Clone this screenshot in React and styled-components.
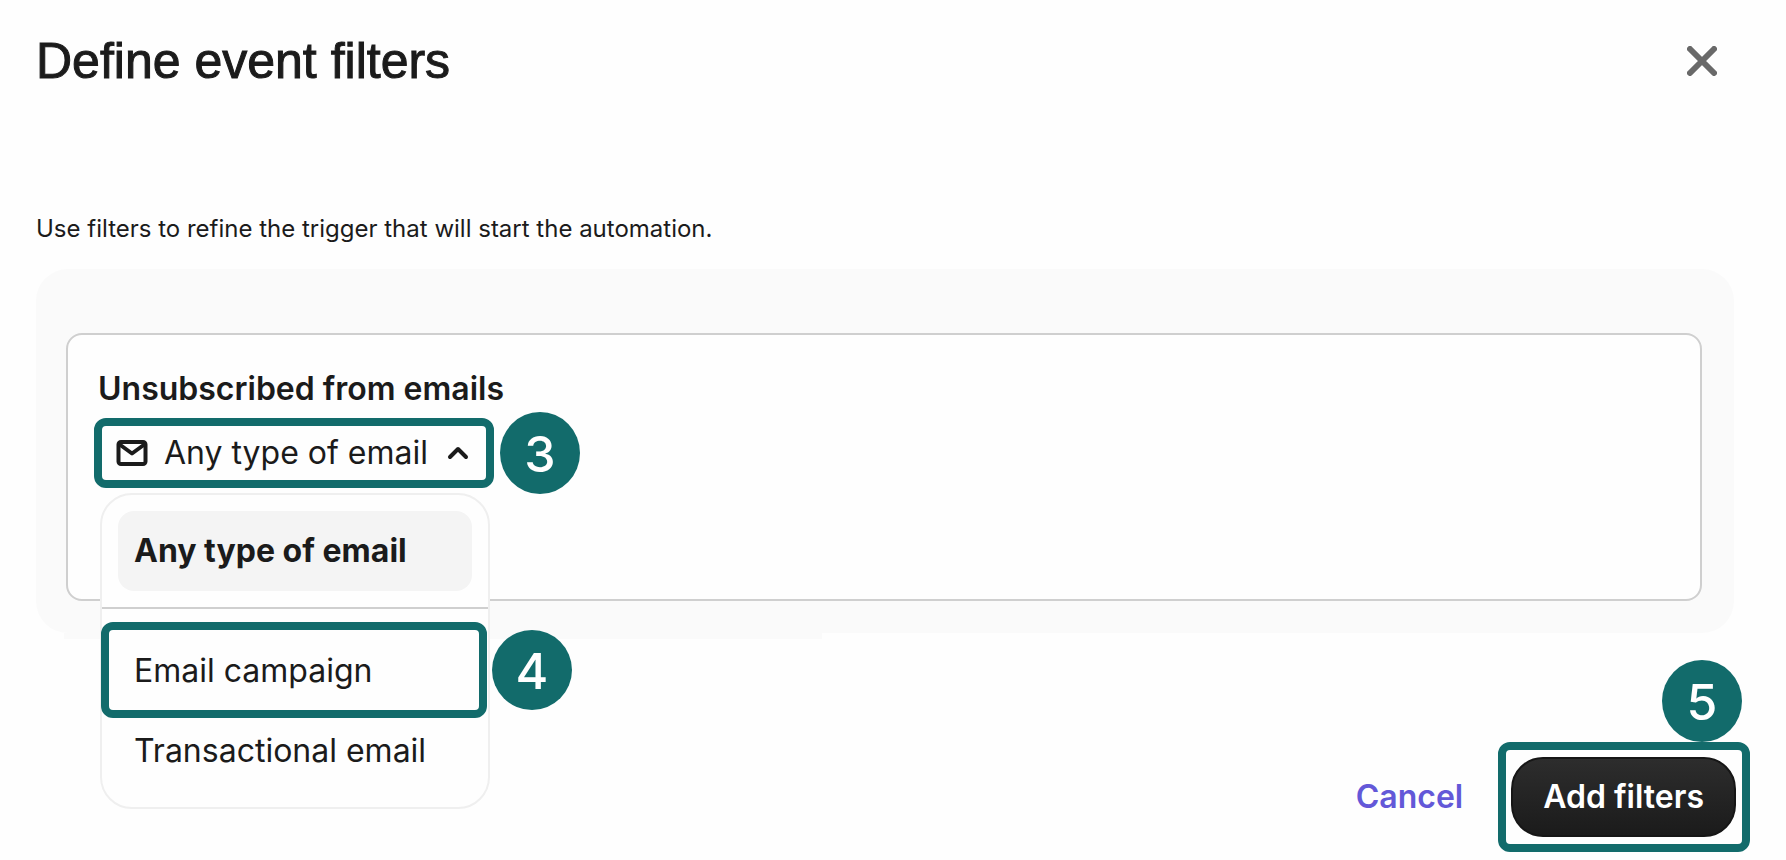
import React, { useState } from 'react';
import styled, { createGlobalStyle } from 'styled-components';

const TEAL = '#126b6b';
const INK = '#1b1b1b';

const GlobalStyle = createGlobalStyle`
    * {
        box-sizing: border-box;
    }

    body {
        margin: 0;
        background: #fefefe;
        color: ${INK};
        font-family: Inter, "Liberation Sans", sans-serif;
    }

    button {
        border: 0;
        padding: 0;
        background: none;
        color: inherit;
        font: inherit;
        cursor: pointer;
    }
`;

const Dialog = styled.main`
    padding: 33px 52px 22px 36px;
`;

const Header = styled.header`
    display: flex;
    align-items: center;
    justify-content: space-between;
    padding-right: 12px;
`;

const Title = styled.h1`
    margin: 0;
    font-family: "Liberation Sans", Arial, sans-serif;
    font-size: 50px;
    font-weight: 400;
    line-height: 56px;
    -webkit-text-stroke: 1px ${INK};
`;

const CloseButton = styled.button`
    display: flex;
    align-items: center;
    justify-content: center;
    width: 40px;
    height: 40px;
`;

const Intro = styled.p`
    margin: 124px 0 24px;
    font-size: 24px;
    line-height: 32px;
`;

const Panel = styled.section`
    position: relative;
    padding: 64px 32px 32px 30px;
    border-radius: 32px;
    background: #fafafa;

    &::after {
        content: '';
        position: absolute;
        top: 100%;
        left: 28px;
        width: 758px;
        height: 6px;
        background: #fafafa;
    }
`;

const Card = styled.div`
    padding: 34px 30px 117px;
    border: 2px solid #cfcfcf;
    border-radius: 16px;
    background: #fefefe;
`;

const CardTitle = styled.h2`
    margin: 0 0 15px;
    font-size: 32px;
    font-weight: 600;
    line-height: 40px;
`;

const Picker = styled.div`
    position: relative;
    z-index: 1;
    width: 388px;
    margin-left: 2px;
`;

const Trigger = styled.button`
    display: flex;
    align-items: center;
    width: 100%;
    height: 58px;
    padding: 0 18px 0 14px;
    font-size: 32px;
    line-height: 40px;
`;

const TriggerLabel = styled.span`
    flex: 1;
    padding-left: 14px;
    text-align: left;
    white-space: nowrap;
`;

const Menu = styled.div`
    position: absolute;
    top: 69px;
    left: 0;
    width: 390px;
    padding: 16px 0;
    border: 2px solid #efefef;
    border-radius: 32px;
    background: #fefefe;
`;

const Divider = styled.hr`
    margin: 16px 0 22px;
    border: 0;
    border-top: 2px solid #cfcfcf;
`;

const OptionRow = styled.div`
    position: relative;
    padding: 0 16px;
`;

const Option = styled.button`
    display: block;
    width: 100%;
    padding: 20px 16px;
    border-radius: 16px;
    background: ${({ $selected }) => ($selected ? '#f4f4f4' : 'transparent')};
    font-size: 32px;
    font-weight: ${({ $selected }) => ($selected ? 700 : 400)};
    line-height: 40px;
    text-align: left;
    white-space: nowrap;
`;

// outline drawn around the control that a step talks about
const Highlight = styled.span`
    position: absolute;
    inset: ${({ $inset }) => $inset};
    border: 8px solid ${TEAL};
    border-radius: 12px;
    pointer-events: none;
`;

const Step = styled.span`
    position: absolute;
    top: ${({ $top }) => $top};
    left: ${({ $left }) => $left};
    display: flex;
    align-items: center;
    justify-content: center;
    width: 80px;
    height: ${({ $height }) => $height || '82px'};
    padding-top: 2px;
    border-radius: 50%;
    background: ${TEAL};
    color: #ffffff;
    font-size: 50px;
    font-weight: 500;
    line-height: 60px;
    pointer-events: none;
`;

const Footer = styled.footer`
    display: flex;
    align-items: center;
    justify-content: flex-end;
    gap: 48px;
    margin: 124px -2px 0 0;
    font-size: 32px;
    font-weight: 600;
    line-height: 40px;
`;

const CancelButton = styled.button`
    color: #6358d8;
`;

const SubmitWrap = styled.div`
    position: relative;
`;

const SubmitButton = styled.button`
    padding: 18px 30px;
    border: 2px solid #161616;
    border-radius: 32px;
    background: linear-gradient(#2d2d2d, #1b1b1b);
    color: #ffffff;
    white-space: nowrap;
`;

const CloseIcon = () => (
    <svg width="30" height="30" viewBox="0 0 30 30" fill="none" aria-hidden="true">
        <path d="M3 3L27 27M27 3L3 27" stroke="#696969" strokeWidth="6" strokeLinecap="round" />
    </svg>
);

const MailIcon = () => (
    <svg width="36" height="36" viewBox="0 0 36 36" fill="none" stroke={INK} strokeWidth="4" strokeLinejoin="round" aria-hidden="true">
        <rect x="4.5" y="7" width="27" height="22" rx="2.5" />
        <path d="M5 9L18 18.5L31 9" />
    </svg>
);

const ChevronIcon = () => (
    <svg width="24" height="24" viewBox="0 0 24 24" fill="none" aria-hidden="true">
        <path d="M4 16L12 8L20 16" stroke={INK} strokeWidth="4" strokeLinecap="round" strokeLinejoin="round" />
    </svg>
);

const ANY = 'Any type of email';
const TYPES = ['Email campaign', 'Transactional email'];

export default function App() {
    const [open, setOpen] = useState(true);
    const [selected, setSelected] = useState(ANY);

    const renderOption = (name) => (
        <Option
            type="button"
            role="option"
            aria-selected={selected === name}
            $selected={selected === name}
            onClick={() => setSelected(name)}
        >
            {name}
        </Option>
    );

    return (
        <>
            <GlobalStyle />
            <Dialog>
                <Header>
                    <Title>Define event filters</Title>
                    <CloseButton type="button" aria-label="Close">
                        <CloseIcon />
                    </CloseButton>
                </Header>

                <Intro>Use filters to refine the trigger that will start the automation.</Intro>

                <Panel>
                    <Card>
                        <CardTitle id="filter-title">Unsubscribed from emails</CardTitle>
                        <Picker>
                            <Trigger
                                type="button"
                                aria-haspopup="listbox"
                                aria-expanded={open}
                                onClick={() => setOpen(!open)}
                            >
                                <MailIcon />
                                <TriggerLabel>{selected}</TriggerLabel>
                                <ChevronIcon />
                            </Trigger>
                            {open && (
                                <Menu role="listbox" aria-labelledby="filter-title">
                                    <OptionRow>{renderOption(ANY)}</OptionRow>
                                    <Divider />
                                    {TYPES.map((name, i) => (
                                        <OptionRow key={name}>
                                            {renderOption(name)}
                                            {i === 0 && (
                                                <>
                                                    <Highlight $inset="-9px 1px -7px -1px" />
                                                    <Step $top="-1px" $left="390px" $height="80px">4</Step>
                                                </>
                                            )}
                                        </OptionRow>
                                    ))}
                                </Menu>
                            )}
                            <Highlight $inset="-6px" />
                            <Step $top="-12px" $left="400px">3</Step>
                        </Picker>
                    </Card>
                </Panel>

                <Footer>
                    <CancelButton type="button">Cancel</CancelButton>
                    <SubmitWrap>
                        <SubmitButton type="button">Add filters</SubmitButton>
                        <Highlight $inset="-15px -14px -15px -13px" />
                        <Step $top="-97px" $left="calc(100% - 74px)">5</Step>
                    </SubmitWrap>
                </Footer>
            </Dialog>
        </>
    );
}
